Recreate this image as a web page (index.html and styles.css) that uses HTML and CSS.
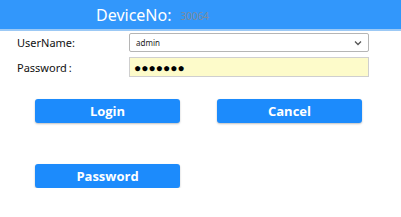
FILE: index.html
```html
<!DOCTYPE html>
<html>
<head>
<meta charset="utf-8">
<link rel="stylesheet" href="styles.css">
</head>
<body>
<div class="header">
  <span class="title">DeviceNo:</span><span class="devno">30064</span>
</div>
<div class="form">
  <div class="row row-user">
    <label class="label">UserName:</label>
    <div class="select"><span>admin</span><svg class="chev" width="8" height="6" viewBox="0 0 8 6"><path d="M1 1.5 L4 4.5 L7 1.5" fill="none" stroke="#555" stroke-width="1.3"/></svg></div>
  </div>
  <div class="row row-pass">
    <label class="label">Password<span class="colon">:</span></label>
    <div class="input">●●●●●●●</div>
  </div>
</div>
<div class="buttons">
  <button class="btn">Login</button>
  <button class="btn">Cancel</button>
</div>
<div class="buttons second">
  <button class="btn">Password</button>
</div>
</body>
</html>
```
FILE: styles.css
```css
html, body {
  margin: 0;
  padding: 0;
  background: #fff;
  font-family: "Noto Sans", "Open Sans", sans-serif;
}
.header {
  height: 29px;
  background: #3297fb;
  border-bottom: 2px solid #9cc9f5;
  display: flex;
  align-items: center;
  padding-left: 96px;
  box-sizing: content-box;
}
.title {
  color: #fff;
  font-size: 16px;
  line-height: 1;
}
.devno {
  color: #7f8c9c;
  font-size: 10px;
  margin-left: 9px;
  margin-top: 3px;
}
.form {
  padding: 2px 0 0 0;
}
.row {
  display: flex;
  align-items: center;
}
.label {
  width: 112px;
  padding-left: 17px;
  font-size: 11px;
  color: #111;
}
.colon {
  margin-left: 2px;
}
.select {
  width: 240px;
  height: 19px;
  box-sizing: border-box;
  border: 1px solid #b5b5b5;
  border-radius: 2px;
  display: flex;
  align-items: center;
  justify-content: space-between;
  padding: 0 6px 0 6px;
  font-size: 8px;
  color: #222;
}
.chev { margin-top: 1px; }
.row-pass { margin-top: 5px; }
.input {
  width: 240px;
  height: 20px;
  box-sizing: border-box;
  border: 1px solid #cfcfcf;
  background: #fdfbca;
  display: flex;
  align-items: center;
  padding-left: 4px;
  font-size: 12px;
  letter-spacing: 0;
  color: #000;
}
.buttons {
  display: flex;
  gap: 37px;
  padding-left: 35px;
  margin-top: 22px;
}
.buttons.second {
  margin-top: 41px;
}
.btn {
  width: 145px;
  height: 24px;
  border: none;
  border-radius: 3px;
  background: #1c8bfc;
  color: #fff;
  font-family: "Open Sans", "Noto Sans", sans-serif;
  font-weight: bold;
  font-size: 13px;
  box-shadow: 0 1px 2px rgba(0,0,0,0.25);
  padding: 0;
}
```
